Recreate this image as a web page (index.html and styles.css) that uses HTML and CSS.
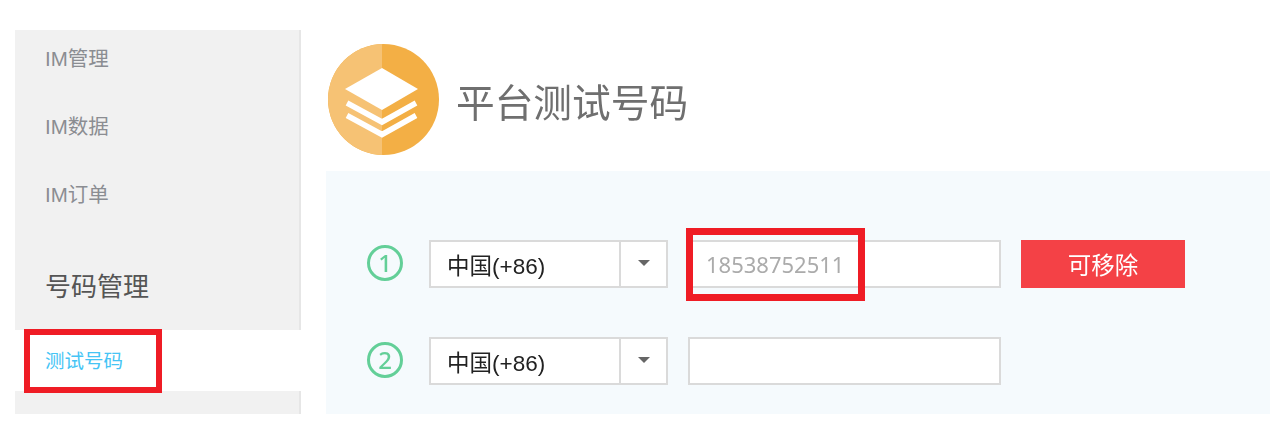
FILE: index.html
```html
<!DOCTYPE html>
<html lang="zh-CN">
<head>
<meta charset="utf-8">
<title>平台测试号码</title>
<link rel="stylesheet" href="styles.css">
</head>
<body>
<div class="page">
  <aside class="sidebar">
    <a class="nav-item">IM管理</a>
    <a class="nav-item">IM数据</a>
    <a class="nav-item">IM订单</a>
    <div class="nav-title">号码管理</div>
    <a class="nav-item nav-active">测试号码</a>
  </aside>
  <main class="main">
    <header class="header">
      <svg class="logo" viewBox="0 0 111 111" width="111" height="111" aria-hidden="true">
        <defs><clipPath id="c"><circle cx="55.5" cy="55.5" r="55.5"/></clipPath></defs>
        <g clip-path="url(#c)">
          <rect width="111" height="111" fill="#f3af45"/>
          <rect width="54" height="111" fill="#f6c274"/>
        </g>
        <path d="M54 24 L90 45 L54 66 L17 45 Z" fill="#fff"/>
        <path d="M19 59 L54 78 L88 59" fill="none" stroke="#fff" stroke-width="5.5"/>
        <path d="M19 71.5 L54 90.5 L88 71.5" fill="none" stroke="#fff" stroke-width="5.5"/>
      </svg>
      <h1 class="title">平台测试号码</h1>
    </header>
    <section class="panel">
      <div class="row">
        <span class="step">1</span>
        <div class="select"><span class="select-value">中国(+86)</span><span class="select-arrow"></span></div>
        <input class="phone" type="text" placeholder="18538752511">
        <button class="remove" type="button">可移除</button>
      </div>
      <div class="row">
        <span class="step">2</span>
        <div class="select"><span class="select-value">中国(+86)</span><span class="select-arrow"></span></div>
        <input class="phone" type="text">
      </div>
    </section>
  </main>
</div>
<div class="mark mark-nav"></div>
<div class="mark mark-phone"></div>
</body>
</html>
```
FILE: styles.css
```css
* { box-sizing: border-box; }
html, body { margin: 0; height: 433px; overflow: hidden; background: #fff; }
body {
  position: relative;
  font-family: "Noto Sans", "Noto Sans CJK SC", sans-serif;
}
.page {
  display: flex;
  height: 384px;
  margin: 30px 0 0 15px;
  filter: blur(0.4px);
}
.sidebar {
  display: flex;
  flex-direction: column;
  gap: 12px;
  flex: none;
  width: 286px;
  background: #f1f1f1;
  border-right: 2px solid #e6e6e6;
}
.nav-item {
  display: flex;
  align-items: center;
  height: 56px;
  padding: 0 0 3px 30px;
  font-family: "Liberation Sans", "Noto Sans CJK SC", sans-serif;
  font-size: 20.5px;
  color: #8b8d92;
}
.nav-title {
  display: flex;
  align-items: center;
  height: 56px;
  margin-top: 24px;
  padding: 0 0 3px 30px;
  font-size: 26px;
  color: #555;
}
.nav-active {
  height: 61px;
  margin-top: 4px;
  margin-right: -2px;
  background: #fff;
  font-size: 19.5px;
  color: #45c4f5;
}
.main {
  display: flex;
  flex-direction: column;
  flex: 1;
  margin-left: 25px;
}
.header {
  display: flex;
  align-items: center;
  gap: 17px;
  flex: none;
  height: 141px;
  padding: 14px 0 16px 2px;
}
.logo { flex: none; }
.title {
  margin: 0;
  font-size: 38.7px;
  font-weight: 400;
  color: #6f6f6f;
}
.panel {
  flex: 1;
  display: flex;
  flex-direction: column;
  gap: 49px;
  padding: 69px 0 0 41px;
  background: #f5fafd;
}
.row {
  display: flex;
  align-items: center;
  height: 48px;
}
.step {
  display: flex;
  align-items: center;
  justify-content: center;
  flex: none;
  width: 36px;
  height: 36px;
  margin-top: -2px;
  margin-right: 26px;
  border: 3.5px solid #63cf98;
  border-radius: 50%;
  font-size: 24px;
  font-weight: 500;
  line-height: 1;
  color: #63cf98;
}
.select {
  display: flex;
  flex: none;
  width: 239px;
  height: 48px;
  margin-right: 20px;
  background: #fff;
  border: 2px solid #dadada;
}
.select-value {
  display: flex;
  align-items: center;
  flex: 1;
  padding-left: 16px;
  font-family: "Liberation Sans", "Noto Sans CJK SC", sans-serif;
  font-size: 22.5px;
  color: #222;
}
.select-arrow {
  position: relative;
  flex: none;
  width: 47px;
  border-left: 2px solid #dadada;
}
.select-arrow::after {
  content: "";
  position: absolute;
  left: 17px;
  top: 18px;
  border-style: solid;
  border-width: 6px 6px 0;
  border-color: #666 transparent transparent;
}
.phone {
  flex: none;
  width: 313px;
  height: 48px;
  margin-right: 20px;
  padding: 0 16px;
  background: #fff;
  border: 2px solid #dadada;
  border-radius: 0;
  outline: none;
  font: inherit;
  font-size: 22px;
}
.phone::placeholder { color: #ababab; opacity: 1; }
.remove {
  flex: none;
  width: 164px;
  height: 48px;
  padding: 0;
  background: #f44146;
  border: 0;
  color: #fff;
  font: inherit;
  font-size: 23.5px;
}
.mark {
  position: absolute;
  border: 6px solid #ef1c25;
}
.mark-nav { left: 24px; top: 329px; width: 138px; height: 64px; }
.mark-phone { left: 686px; top: 228px; width: 179px; height: 73px; border-width: 7px; }
```
